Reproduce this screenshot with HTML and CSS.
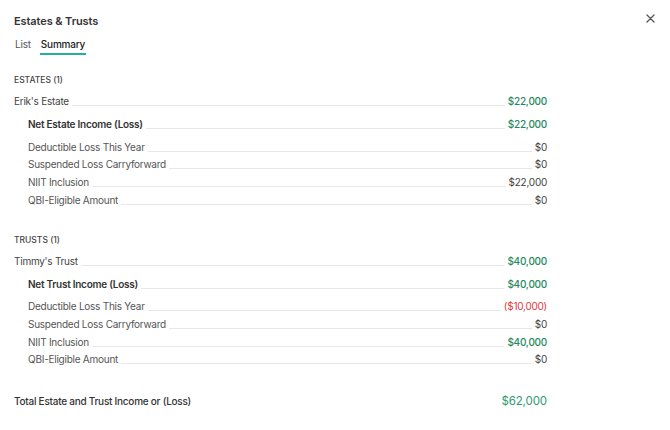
FILE: index.html
```html
<!DOCTYPE html>
<html lang="en">
<head>
<meta charset="utf-8">
<title>Estates &amp; Trusts</title>
<link rel="stylesheet" href="styles.css">
</head>
<body>
<div class="panel">
  <header class="panel-head">
    <h1 class="title">Estates &amp; Trusts</h1>
    <button class="close" aria-label="Close">
      <svg width="9" height="9" viewBox="0 0 9 9"><path d="M1 1 L8 8 M8 1 L1 8" stroke="#555" stroke-width="1.3" stroke-linecap="round"/></svg>
    </button>
  </header>

  <nav class="tabs">
    <span class="tab">List</span>
    <span class="tab active">Summary</span>
  </nav>

  <section class="group">
    <h2 class="group-title">ESTATES (1)</h2>
    <div class="row item"><span class="label">Erik's Estate</span><span class="leader"></span><span class="value pos">$22,000</span></div>
    <div class="row net"><span class="label">Net Estate Income (Loss)</span><span class="leader"></span><span class="value pos">$22,000</span></div>
    <div class="row detail first"><span class="label">Deductible Loss This Year</span><span class="leader"></span><span class="value">$0</span></div>
    <div class="row detail"><span class="label">Suspended Loss Carryforward</span><span class="leader"></span><span class="value">$0</span></div>
    <div class="row detail"><span class="label">NIIT Inclusion</span><span class="leader"></span><span class="value">$22,000</span></div>
    <div class="row detail"><span class="label">QBI-Eligible Amount</span><span class="leader"></span><span class="value">$0</span></div>
  </section>

  <section class="group">
    <h2 class="group-title">TRUSTS (1)</h2>
    <div class="row item"><span class="label">Timmy's Trust</span><span class="leader"></span><span class="value pos">$40,000</span></div>
    <div class="row net"><span class="label">Net Trust Income (Loss)</span><span class="leader"></span><span class="value pos">$40,000</span></div>
    <div class="row detail first"><span class="label">Deductible Loss This Year</span><span class="leader"></span><span class="value neg">($10,000)</span></div>
    <div class="row detail"><span class="label">Suspended Loss Carryforward</span><span class="leader"></span><span class="value">$0</span></div>
    <div class="row detail"><span class="label">NIIT Inclusion</span><span class="leader"></span><span class="value pos">$40,000</span></div>
    <div class="row detail"><span class="label">QBI-Eligible Amount</span><span class="leader"></span><span class="value">$0</span></div>
  </section>

  <div class="total">
    <span class="total-label">Total Estate and Trust Income or (Loss)</span>
    <span class="total-value">$62,000</span>
  </div>
</div>
</body>
</html>
```

FILE: styles.css
```css
* { box-sizing: border-box; }

html, body {
  margin: 0;
  background: #fff;
}

body {
  font-family: Inter, "Noto Sans", sans-serif;
  color: #444;
  width: 670px;
  height: 430px;
  overflow: hidden;
}

.panel {
  padding: 12px 14px 0 14px;
}

.panel-head {
  display: flex;
  justify-content: space-between;
  align-items: flex-start;
}

.title {
  margin: 1px 0 0 0;
  font-size: 11px;
  line-height: 16px;
  font-weight: 600;
  color: #333;
  letter-spacing: -0.1px;
}

.close {
  border: 0;
  background: none;
  padding: 0;
  margin: 2px 1px 0 0;
  width: 9px;
  height: 9px;
  display: flex;
}

.tabs {
  display: flex;
  gap: 8px;
  margin-top: 8px;
  margin-left: 1px;
}

.tab {
  font-size: 10px;
  line-height: 14px;
  padding: 0 1px 2px 0;
  color: #555;
  letter-spacing: -0.2px;
  border-bottom: 2px solid transparent;
}

.tab.active {
  color: #222;
  font-weight: 500;
  padding-left: 1px;
  border-bottom-color: #22b0a4;
}

.group {
  width: 533px;
}

.group-title {
  margin: 18px 0 5px 0;
  font-size: 8.5px;
  line-height: 14px;
  font-weight: 500;
  color: #444;
}

.group + .group .group-title {
  margin-top: 24px;
}

.row {
  display: flex;
  align-items: center;
  height: 18px;
  font-size: 10px;
  letter-spacing: -0.25px;
}

.leader {
  flex: 1;
  align-self: stretch;
  border-bottom: 1px solid #e7e7e7;
  margin: 0 3px 4px 3px;
}

.row.item .label { color: #444; }

.row.net {
  margin-top: 5px;
  padding-left: 14px;
}
.row.net .label {
  font-weight: 600;
  color: #333;
}

.row.detail {
  padding-left: 14px;
  height: 17.67px;
}
.row.detail.first { margin-top: 5px; }
.row.detail .label { color: #555; }

.value {
  color: #444;
  white-space: nowrap;
}
.value.pos { color: #1f8a5e; font-weight: 500; }
.value.neg { color: #e0393e; }

.total {
  width: 533px;
  margin-top: 24px;
  display: flex;
  justify-content: space-between;
  align-items: center;
  height: 18px;
}

.total-label {
  font-size: 10px;
  font-weight: 500;
  color: #333;
  letter-spacing: -0.25px;
}

.total-value {
  font-size: 11.5px;
  color: #2f9a72;
  letter-spacing: -0.1px;
}
```
